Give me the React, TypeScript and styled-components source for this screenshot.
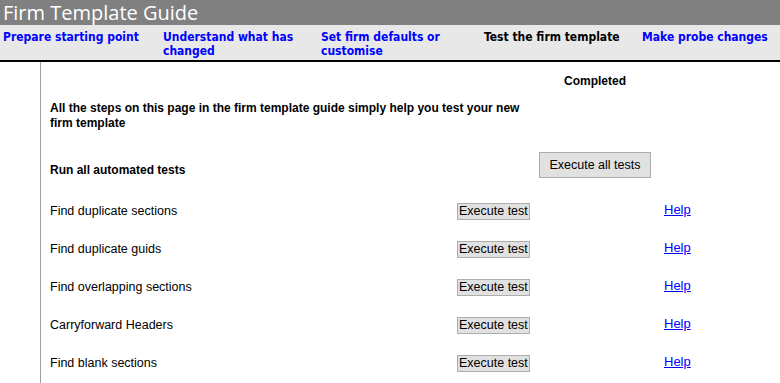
import React from 'react';
import styled, { createGlobalStyle } from 'styled-components';

const GlobalStyle = createGlobalStyle`
  html, body {
    margin: 0;
    padding: 0;
    background: #ffffff;
    font-family: "Liberation Sans", Arial, sans-serif;
  }
`;

const Page = styled.div`
  display: flex;
  flex-direction: column;
  height: 383px;
  overflow: hidden;
`;

const TitleBar = styled.div`
  height: 25px;
  flex-shrink: 0;
  background: #808080;
  color: #ffffff;
  font-family: "Open Sans", "DejaVu Sans", sans-serif;
  font-size: 20px;
  line-height: 25px;
  padding-left: 3px;
  white-space: nowrap;
`;

const NavBar = styled.div`
  display: grid;
  grid-template-columns: 160px 158px 163px 158px 1fr;
  height: 37px;
  flex-shrink: 0;
  padding: 5px 0 0 3px;
  box-sizing: border-box;
  background: #e8e8e8;
  border-bottom: 2px solid #000000;
`;

const NavItem = styled.a<{ $active?: boolean }>`
  font-family: "DejaVu Sans Condensed", "DejaVu Sans", sans-serif;
  font-weight: bold;
  font-size: 12px;
  line-height: 14px;
  padding-right: 8px;
  color: ${(p) => (p.$active ? '#000000' : '#0000ff')};
  text-decoration: none;
  cursor: pointer;
`;

const Body = styled.div`
  flex: 1;
  display: flex;
`;

const Gutter = styled.div`
  width: 40px;
  border-right: 1px solid #a0a0a0;
  flex-shrink: 0;
`;

const Content = styled.div`
  flex: 1;
  padding: 12px 0 0 9px;
  color: #000000;
`;

const TopGrid = styled.div`
  display: grid;
  grid-template-columns: 470px 150px;
  row-gap: 12px;
`;

const StatusHead = styled.div`
  grid-column: 2;
  text-align: center;
  font-weight: bold;
  font-size: 12px;
  line-height: 15px;
`;

const Intro = styled.div`
  grid-column: 1 / 3;
  max-width: 482px;
  font-weight: bold;
  font-size: 12px;
  line-height: 15px;
`;

const RunAllRow = styled.div`
  display: grid;
  grid-template-columns: 470px 150px;
  align-items: end;
  margin-top: 21px;
`;

const RunAllLabel = styled.div`
  font-weight: bold;
  font-size: 12px;
  line-height: 15px;
`;

const Cell = styled.div`
  display: flex;
  justify-content: center;
`;

const Button = styled.button<{ $big?: boolean }>`
  font-family: "Liberation Sans", Arial, sans-serif;
  font-size: 12.5px;
  color: #000000;
  background: #e1e1e1;
  border: 1px solid #adadad;
  border-radius: 0;
  margin: 0;
  box-sizing: border-box;
  height: ${(p) => (p.$big ? '26px' : '17px')};
  padding: ${(p) => (p.$big ? '0 9px' : '0 1px')};
  line-height: 1;
  cursor: pointer;
`;

const TestList = styled.div`
  margin-top: 14px;
`;

const TestRow = styled.div`
  display: grid;
  grid-template-columns: 407px 207px auto;
  align-items: center;
  height: 38px;
`;

const TestLabel = styled.div`
  font-size: 12.5px;
  line-height: 15px;
`;

const ButtonCell = styled.div`
  display: flex;
`;

const HelpLink = styled.a`
  font-size: 13px;
  color: #0000ff;
  text-decoration: underline;
  margin-top: -3px;
  cursor: pointer;
`;

const navItems = [
  { label: 'Prepare starting point' },
  { label: 'Understand what has changed' },
  { label: 'Set firm defaults or customise' },
  { label: 'Test the firm template', active: true },
  { label: 'Make probe changes' },
];

const tests = [
  'Find duplicate sections',
  'Find duplicate guids',
  'Find overlapping sections',
  'Carryforward Headers',
  'Find blank sections',
];

export default function App() {
  return (
    <Page>
      <GlobalStyle />
      <TitleBar>Firm Template Guide</TitleBar>
      <NavBar>
        {navItems.map((item) => (
          <NavItem key={item.label} $active={item.active}>
            {item.label}
          </NavItem>
        ))}
      </NavBar>
      <Body>
        <Gutter />
        <Content>
          <TopGrid>
            <StatusHead>Completed</StatusHead>
            <Intro>
              All the steps on this page in the firm template guide simply help
              you test your new firm template
            </Intro>
          </TopGrid>
          <RunAllRow>
            <RunAllLabel>Run all automated tests</RunAllLabel>
            <Cell>
              <Button $big>Execute all tests</Button>
            </Cell>
          </RunAllRow>
          <TestList>
            {tests.map((t) => (
              <TestRow key={t}>
                <TestLabel>{t}</TestLabel>
                <ButtonCell>
                  <Button>Execute test</Button>
                </ButtonCell>
                <HelpLink>Help</HelpLink>
              </TestRow>
            ))}
          </TestList>
        </Content>
      </Body>
    </Page>
  );
}
